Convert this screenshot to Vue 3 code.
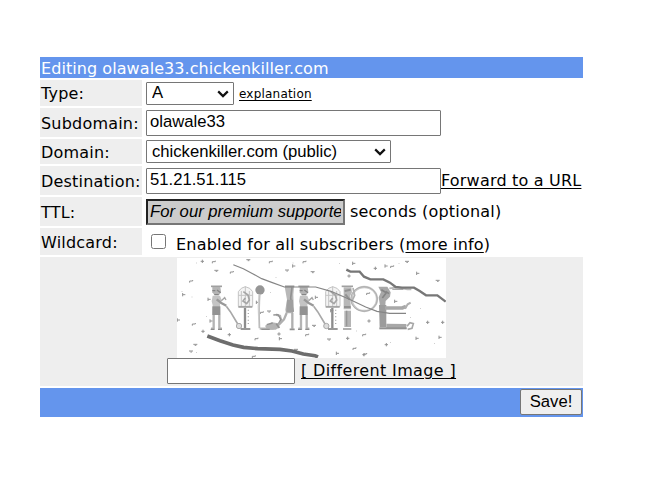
<script setup>
import { ref } from 'vue'

const subdomain = ref('olawale33')
const destination = ref('51.21.51.115')
const ttl = ref('For our premium supporters')
const wildcard = ref(false)
const answer = ref('')

// Speckle positions, in the captcha's 807 x 300 drawing units
const crosses = [
  [76, 10], [78, 220], [157, 230], [306, 228], [516, 54], [595, 31], [576, 189], [512, 241],
  [752, 193], [797, 193], [628, 260], [561, 290]
]
const rights = [
  [20, 110], [4, 186], [96, 124], [102, 189], [241, 133], [350, 24], [310, 242], [530, 16],
  [418, 118], [627, 24], [722, 46], [656, 130], [720, 241], [789, 238], [481, 286], [464, 158]
]
const ticks = [
  [42, 69], [164, 42], [50, 198], [238, 242], [230, 295], [254, 163], [110, 11], [281, 11],
  [382, 11], [645, 25], [573, 106], [561, 230], [532, 271], [390, 230], [564, 288]
]
const downs = [
  [118, 40], [214, 8], [42, 282], [55, 262], [276, 162], [407, 44], [690, 13], [782, 70],
  [456, 246], [411, 205], [330, 39], [357, 277]
]
const dots = [
  [44, 116], [14, 100], [58, 14], [58, 282], [87, 175], [280, 103], [347, 14], [296, 58], [486, 16],
  [730, 151], [772, 112], [640, 252], [772, 256], [665, 15], [538, 218], [700, 178], [345, 280]
]
</script>

<template>
  <form class="editor" @submit.prevent>
    <div class="bar title"><span class="t-title">Editing olawale33.chickenkiller.com</span></div>

    <div class="row r-type">
      <label class="name">Type:</label>
      <div class="value">
        <span class="pick pick-type">
          <select><option>A</option></select>
          <svg viewBox="0 0 12 8"><path d="M1.2 1.4 6 6.1l4.8-4.7" /></svg>
        </span>
        <a class="small">explanation</a>
      </div>
    </div>

    <div class="row r-tall">
      <label class="name">Subdomain:</label>
      <div class="value"><input v-model="subdomain" class="field wide" type="text" /></div>
    </div>

    <div class="row r-domain">
      <label class="name">Domain:</label>
      <div class="value">
        <span class="pick pick-domain">
          <select><option>chickenkiller.com (public)</option></select>
          <svg viewBox="0 0 12 8"><path d="M1.2 1.4 6 6.1l4.8-4.7" /></svg>
        </span>
      </div>
    </div>

    <div class="row r-tall">
      <label class="name">Destination:</label>
      <div class="value">
        <input v-model="destination" class="field wide" type="text" />
        <a class="forward">Forward to a URL</a>
      </div>
    </div>

    <div class="row r-tall">
      <label class="name">TTL:</label>
      <div class="value">
        <input v-model="ttl" class="field ttl" type="text" readonly />
        <span class="seconds">seconds (optional)</span>
      </div>
    </div>

    <div class="row r-wild">
      <label class="name">Wildcard:</label>
      <div class="value">
        <input v-model="wildcard" class="check" type="checkbox" />
        <span class="enabled">Enabled for all subscribers (<a>more info</a>)</span>
      </div>
    </div>

    <div class="captcha">
      <svg class="puzzle" viewBox="0 0 807 300" fill="none">
        <rect width="807" height="300" fill="#fff" />
        <g stroke="#929292" fill="#929292" stroke-width="3">
          <path v-for="([x, y], i) in crosses" :key="'c' + i" :d="`M${x - 5} ${y}h10M${x} ${y - 5}v10`" />
          <path v-for="([x, y], i) in rights" :key="'r' + i" :d="`M${x - 3} ${y - 5}v10M${x - 3} ${y}h8`" />
          <path v-for="([x, y], i) in ticks" :key="'t' + i" :d="`M${x - 4} ${y + 5}v-5h9v-3`" fill="none" />
          <path v-for="([x, y], i) in downs" :key="'d' + i" :d="`M${x - 6} ${y - 3}h12M${x - 2} ${y}h5`" />
          <rect v-for="([x, y], i) in dots" :key="'o' + i" :x="x" :y="y" width="2" height="2" stroke="none" />
        </g>

        <!-- man with a pole, beside a bird cage on a stand -->
        <g v-for="dx in [0, 262]" :key="dx" :transform="`translate(${dx} 0)`">
          <path d="M102 85h33" stroke="#a0a0a0" stroke-width="5" />
          <path d="M106 87h24l2 15-6 10h-13l-7-9z" fill="#b4b4b4" />
          <path d="M106 98h9M120 96l11 8M112 110h13" stroke="#858585" stroke-width="4" />
          <path d="M107 113h22l5 13-5 14 1 31h-24l1-29-3-12z" fill="#c4c4c4" />
          <path d="M106 145h24v26h-24z" fill="#929292" />
          <path d="M110 171v41h-8M127 171v41h8" stroke="#b4b4b4" stroke-width="7" />
          <path d="M101 214h11M123 214h12" stroke="#8c8c8c" stroke-width="4" />
          <path d="M119 124l14 11 15 8" stroke="#999" stroke-width="7" />
          <path d="M133 128l10-9 4 7" stroke="#a5a5a5" stroke-width="4" />
          <path d="M148 145l12 16 24 40" stroke="#a8a8a8" stroke-width="5" />
          <circle cx="186" cy="204" r="8" fill="#ddd" stroke="#aaa" stroke-width="3" />
          <path d="M184 145v-44q8-13 21-15 16 3 22 15v44zM193 145v-46M217 99v46M205 85v60M184 112h43" fill="#f4f4f4" stroke="#c4c4c4" stroke-width="3" />
          <path d="M199 101l14 10 4 15-8 11-11-8 7-9" stroke="#a5a5a5" stroke-width="5" />
          <path d="M184 147h42" stroke="#909090" stroke-width="4" />
          <path d="M204 150v61" stroke="#8c8c8c" stroke-width="7" />
          <path d="M191 213h29" stroke="#999" stroke-width="6" />
          <path d="M214 155v50" stroke="#aaa" stroke-width="4" stroke-dasharray="3 7" />
        </g>

        <!-- balloon, string and the curled bird -->
        <circle cx="249" cy="96" r="14" fill="#969696" />
        <path d="M247 110l-2 36 2 65" stroke="#cfcfcf" stroke-width="6" />
        <path d="M249 110l-2 52 1 48" stroke="#b0b0b0" stroke-width="2" />
        <path d="M248 212h39l14-8 11-18-3-12-12-4" stroke="#b8b8b8" stroke-width="7" />
        <path d="M264 203l21-10 19 3 4 12-12 7h-26z" fill="#b4b4b4" />
        <path d="M289 171l14-1 9 14-7 15M253 214h25M269 200l18-5" stroke="#929292" stroke-width="4" />

        <!-- figure with parted legs -->
        <path d="M323 86h28l-2 24 2 49-4 7h-20l-2-11 5-30z" fill="#b8b8b8" />
        <path d="M324 85h28M345 88l-4 32 7 42" stroke="#929292" stroke-width="5" />
        <path d="M330 125h18v38h-20z" fill="#a0a0a0" />
        <path d="M329 165l-8 19-16 17M346 164v48" stroke="#b0b0b0" stroke-width="7" />
        <path d="M298 197l9 13M338 214h15" stroke="#929292" stroke-width="5" />

        <!-- figure forming the stem, and its ring -->
        <path d="M494 85h34" stroke="#a0a0a0" stroke-width="5" />
        <path d="M500 88h23l2 15-6 12 3 39h-22v-42z" fill="#b8b8b8" />
        <path d="M503 99l18-4M505 109l13 16M501 147h20" stroke="#929292" stroke-width="6" />
        <path d="M502 158h20v49h-20z" fill="#b4b4b4" />
        <path d="M509 158v47M498 213h25" stroke="#969696" stroke-width="4" />
        <ellipse cx="562" cy="123" rx="38" ry="36" stroke="#c8c8c8" stroke-width="7" />
        <ellipse cx="561" cy="123" rx="40" ry="37" stroke="#a0a0a0" stroke-width="2" />
        <path d="M528 90l5 22-7 15" stroke="#b0b0b0" stroke-width="5" />

        <!-- seated figure -->
        <path d="M604 86h27l10 17-2 13-13 13-1 13-16 1-4-25 7-16z" fill="#a8a8a8" />
        <path d="M606 141h22v67h-20z" fill="#9c9c9c" />
        <path d="M613 95l15 9-12 16M626 100l10 7" stroke="#858585" stroke-width="5" />
        <path d="M637 91l24-3 30 6h12" stroke="#b8b8b8" stroke-width="5" />
        <path d="M646 94h33" stroke="#999" stroke-width="3" />
        <path d="M624 150h52l11-5" stroke="#a8a8a8" stroke-width="11" />
        <path d="M684 152l8-13 9-5" stroke="#b0b0b0" stroke-width="6" />
        <path d="M628 204l60 1" stroke="#a8a8a8" stroke-width="14" />
        <path d="M607 211h82" stroke="#929292" stroke-width="6" />
        <path d="M690 205l9-11 10 3-4 14-13 3" stroke="#a8a8a8" stroke-width="5" />

        <!-- strike lines -->
        <path d="M169 20l30 12 28 15 27 15 30 11 38 14h94l46 13 55 24 49 23 34 13 38 6h49" stroke="#858585" stroke-width="3.5" />
        <path d="M508 35l12 6h28l13 15 19 8h39l20 10 17 13 19 2h36l17 10 19 13h34l25 19" stroke="#777" stroke-width="7" />
        <path d="M91 234l38 14 39 13 32 7 42 4 67 2 36 5 34 9 35 5 9 4" stroke="#6d6d6d" stroke-width="11" />
      </svg>
      <div class="reply">
        <input v-model="answer" class="field answer" type="text" />
        <a class="different">[ Different Image ]</a>
      </div>
    </div>

    <div class="bar footer"><button type="submit">Save!</button></div>
  </form>
</template>

<style>
body {
  background: #fff;
}
</style>

<style scoped>
.editor {
  display: grid;
  gap: 2px;
  width: 543px;
  margin: 57px 0 0 40px;
  color: #000;
  font: 16px/20px "DejaVu Sans", Verdana, sans-serif;
  letter-spacing: 0.2px;
  white-space: nowrap;
}
.bar {
  background: #6495ed;
}
.title {
  box-sizing: border-box;
  height: 21px;
  padding: 2px 1px 0;
  color: #fff;
  letter-spacing: 0.07px;
}
.row {
  display: grid;
  grid-template-columns: 102px 1fr;
  column-gap: 2px;
}
.r-type {
  height: 26px;
}
.r-domain {
  height: 25px;
}
.r-tall {
  height: 29px;
}
.r-wild {
  height: 27px;
}
.name {
  display: flex;
  align-items: center;
  padding: 2px 1px 0;
  background: #eee;
}
.value {
  display: flex;
  align-items: center;
  padding-left: 2px;
}
a {
  text-decoration: underline;
  text-decoration-thickness: 1px;
  text-underline-offset: 2px;
}
.pick {
  position: relative;
  height: 23px;
}
.pick-type {
  width: 88px;
}
.pick-domain {
  width: 245px;
}
.pick select {
  appearance: none;
  display: block;
  box-sizing: border-box;
  width: 100%;
  height: 23px;
  margin: 0;
  padding: 0 5px;
  border: 1px solid #767676;
  border-radius: 1px;
  background: #fff;
  color: #000;
  font: 16.67px/20px "Liberation Sans", Arial, sans-serif;
}
.pick svg {
  position: absolute;
  top: 8px;
  right: 5px;
  width: 12px;
  height: 8px;
  fill: none;
  stroke: #111;
  stroke-width: 2.2;
}
.small {
  margin: 2px 0 0 5px;
  font-size: 12px;
}
.field {
  box-sizing: border-box;
  height: 26px;
  margin: 0;
  padding: 0 3px 1px;
  border: 1px solid #767676;
  border-radius: 1px;
  background: #fff;
  color: #000;
  font: 16.67px "Liberation Sans", Arial, sans-serif;
}
.wide {
  width: 295px;
}
.ttl {
  width: 199px;
  padding: 0 2px;
  border: 2px solid;
  border-color: #222 #767676 #767676 #222;
  border-radius: 0;
  background: #ccc;
  font-style: italic;
}
.seconds {
  margin-left: 5px;
}
.check {
  width: 15px;
  height: 15px;
  margin: 0 0 0 5px;
}
.enabled {
  padding-top: 6px;
  margin-left: 10px;
}
.captcha {
  display: flex;
  flex-direction: column;
  box-sizing: border-box;
  height: 129px;
  padding-top: 1px;
  background: #eee;
}
.puzzle {
  display: block;
  width: 269px;
  height: 100px;
  margin-left: 137px;
}
.reply {
  display: flex;
  align-items: center;
  margin-left: 127px;
}
.answer {
  width: 128px;
}
.different {
  margin-left: 6px;
  letter-spacing: 0.36px;
}
.footer {
  display: flex;
  justify-content: flex-end;
  box-sizing: border-box;
  height: 29px;
  padding: 1px;
}
.footer button {
  box-sizing: border-box;
  width: 62px;
  height: 26px;
  padding: 0 0 1px;
  border: 1px solid #767676;
  border-radius: 2px;
  background: #efefef;
  color: #000;
  font: 16.67px "Liberation Sans", Arial, sans-serif;
}
</style>
